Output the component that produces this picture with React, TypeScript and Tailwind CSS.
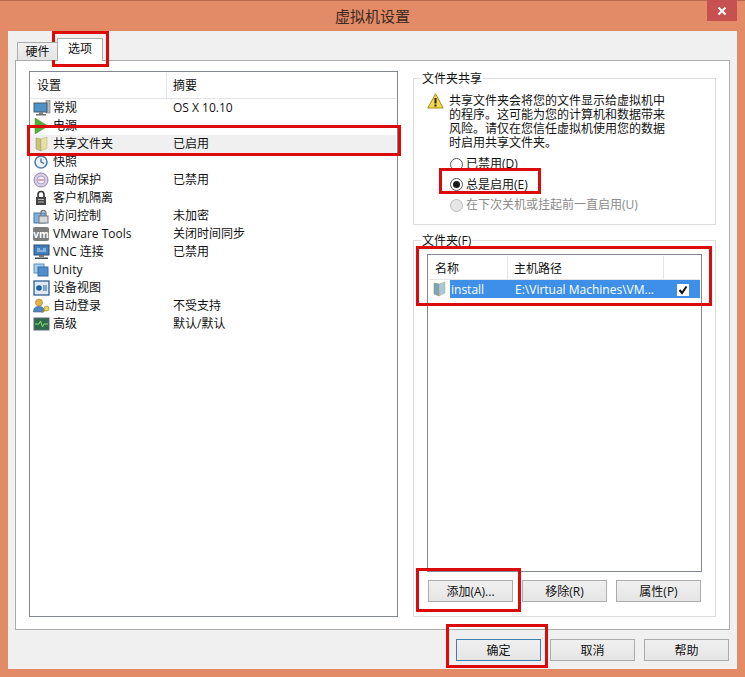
const rows = [
  { icon: "general", name: "常规", value: "OS X 10.10" },
  { icon: "power", name: "电源", value: "" },
  { icon: "folder", name: "共享文件夹", value: "已启用", selected: true },
  { icon: "snapshot", name: "快照", value: "" },
  { icon: "autosave", name: "自动保护", value: "已禁用" },
  { icon: "lock", name: "客户机隔离", value: "" },
  { icon: "access", name: "访问控制", value: "未加密" },
  { icon: "vm", name: "VMware Tools", value: "关闭时间同步" },
  { icon: "vnc", name: "VNC 连接", value: "已禁用" },
  { icon: "unity", name: "Unity", value: "" },
  { icon: "device", name: "设备视图", value: "" },
  { icon: "login", name: "自动登录", value: "不受支持" },
  { icon: "advanced", name: "高级", value: "默认/默认" },
]

function FolderIcon({ blue = false }: { blue?: boolean }) {
  const back = blue ? "#7fa3b8" : "#c9c27a"
  const front = blue ? "#a9c6d6" : "#e6dfa0"
  return (
    <svg width="16" height="16" viewBox="0 0 16 16">
      <path d="M2 2l5 1v12l-5-2z" fill={back} stroke="#8a8a6a" strokeWidth="0.5" />
      <path d="M7 3l6-2v11l-6 3z" fill={front} stroke="#a8a878" strokeWidth="0.5" />
    </svg>
  )
}

function RowIcon({ name }: { name: string }) {
  switch (name) {
    case "general":
      return (
        <svg width="18" height="16" viewBox="0 0 18 16">
          <rect x="13" y="0" width="4" height="13" fill="#b8bcc2" stroke="#6c7075" strokeWidth="0.6" />
          <rect x="1" y="3" width="13" height="9" fill="#4c93c8" stroke="#4d5a66" />
          <rect x="6" y="12" width="4" height="2" fill="#7c838a" />
          <rect x="3" y="14" width="10" height="1.5" fill="#6c7075" />
        </svg>
      )
    case "power":
      return (
        <svg width="18" height="16" viewBox="0 0 18 16">
          <path d="M2 0l13 8-13 8z" fill="#55ae3a" stroke="#3c8a28" strokeWidth="0.5" />
        </svg>
      )
    case "folder":
      return <FolderIcon />
    case "snapshot":
      return (
        <svg width="18" height="16" viewBox="0 0 18 16">
          <circle cx="8" cy="8" r="6" fill="#eaf2fa" stroke="#4d7fb0" strokeWidth="1.6" />
          <path d="M8 4.5V8l3 1.5" fill="none" stroke="#3d5f85" strokeWidth="1.2" />
        </svg>
      )
    case "autosave":
      return (
        <svg width="18" height="16" viewBox="0 0 18 16">
          <circle cx="8" cy="8" r="7" fill="#d8d0e4" stroke="#8f84a8" />
          <circle cx="8" cy="8" r="4" fill="#f2eef6" stroke="#a99cc0" />
          <path d="M5 8h6" stroke="#b05a8a" strokeWidth="1" />
        </svg>
      )
    case "lock":
      return (
        <svg width="18" height="16" viewBox="0 0 18 16">
          <path d="M5 7V4.5a3 3 0 0 1 6 0V7" fill="none" stroke="#333" strokeWidth="1.6" />
          <rect x="3" y="7" width="10" height="8" fill="#444" />
          <path d="M5 9.5h6M5 12h6" stroke="#bbb" />
        </svg>
      )
    case "access":
      return (
        <svg width="18" height="16" viewBox="0 0 18 16">
          <rect x="1" y="5" width="11" height="10" fill="#7fb2dc" stroke="#4a7ba8" />
          <rect x="6" y="8" width="9" height="7" fill="#d9d9d9" stroke="#777" />
          <path d="M8 8V5a2.500 2.500 0 0 1 5 0v3" fill="none" stroke="#777" strokeWidth="1.3" />
        </svg>
      )
    case "vm":
      return (
        <svg width="18" height="16" viewBox="0 0 18 16">
          <rect x="0" y="1" width="16" height="14" rx="2" fill="#7c7c7c" />
          <text x="8" y="11.500" textAnchor="middle" fontSize="10" fontWeight="700" fill="#fff">
            vm
          </text>
        </svg>
      )
    case "vnc":
      return (
        <svg width="18" height="16" viewBox="0 0 18 16">
          <rect x="1" y="1" width="15" height="10" fill="#3f7fbf" stroke="#2d4a6a" />
          <path d="M4 5h3M10 5h3M4 7h9" stroke="#fff" strokeWidth="0.8" />
          <rect x="6" y="11" width="5" height="2" fill="#777" />
          <rect x="2" y="13.500" width="13" height="1.500" fill="#444" />
        </svg>
      )
    case "unity":
      return (
        <svg width="18" height="16" viewBox="0 0 18 16">
          <rect x="1" y="2" width="10" height="9" fill="#a9cdec" stroke="#5d8fbb" />
          <rect x="5" y="5" width="10" height="9" fill="#4f90cc" stroke="#3a6d9e" />
        </svg>
      )
    case "device":
      return (
        <svg width="18" height="16" viewBox="0 0 18 16">
          <rect x="1" y="1" width="15" height="14" fill="#dfe9f3" stroke="#2e5f94" strokeWidth="1.3" />
          <circle cx="6" cy="8" r="2.800" fill="#1f5fa8" />
          <path d="M10 6h4M10 8h4M10 10h4" stroke="#1f5fa8" />
        </svg>
      )
    case "login":
      return (
        <svg width="18" height="16" viewBox="0 0 18 16">
          <circle cx="6" cy="4.500" r="3.500" fill="#e8b04a" stroke="#a87820" strokeWidth="0.6" />
          <path d="M0.500 14c0-4 2-5.500 5.500-5.500S11 10 11 12v2z" fill="#4f86c6" stroke="#2f5f96" strokeWidth="0.6" />
          <circle cx="13.500" cy="10.500" r="2.500" fill="#f0cf5a" stroke="#a88a20" strokeWidth="0.7" />
          <path d="M11.500 12l-3 2.500" stroke="#a88a20" strokeWidth="1.3" />
        </svg>
      )
    default:
      return (
        <svg width="18" height="16" viewBox="0 0 18 16">
          <rect x="1" y="2" width="15" height="12" fill="#2e6b4e" stroke="#5a6a74" />
          <path d="M2 8h4l1.500-3 2 6 1.500-3h4" fill="none" stroke="#8fe36a" />
        </svg>
      )
  }
}

function WarningIcon() {
  return (
    <svg width="17" height="16" viewBox="0 0 17 16">
      <path d="M8.500 0.800L16.200 15H0.800z" fill="#f5d94a" stroke="#a58a1c" strokeLinejoin="round" />
      <rect x="7.500" y="5" width="2" height="5.500" fill="#222" />
      <rect x="7.500" y="11.500" width="2" height="2" fill="#222" />
    </svg>
  )
}

function Radio({ checked = false, disabled = false }: { checked?: boolean; disabled?: boolean }) {
  return (
    <span
      className={`flex h-[13px] w-[13px] shrink-0 items-center justify-center rounded-full border ${
        disabled ? "border-[#bcbcbc] bg-[#e6e6e6]" : "border-[#555555] bg-white"
      }`}
    >
      {checked && <span className="h-[7px] w-[7px] rounded-full bg-[#1a1a1a]" />}
    </span>
  )
}

function WinButton({ label, isDefault = false }: { label: string; isDefault?: boolean }) {
  return (
    <button
      className={`h-[22px] w-[85px] border bg-gradient-to-b from-[#f0f0f0] to-[#e5e5e5] pt-[1px] text-[12px] text-[#111111] ${
        isDefault ? "border-[#3c7fb1]" : "border-[#acacac]"
      }`}
    >
      {label}
    </button>
  )
}

export default function App() {
  return (
    <div
      className="relative flex h-[677px] w-[745px] flex-col overflow-hidden bg-[#e38a66] px-[8px] pb-[8px] text-[12px] leading-[14px] text-[#111111]"
      style={{ fontFamily: '"Open Sans", "Noto Sans CJK SC", sans-serif' }}
    >
      {/* title bar */}
      <div className="-mx-[8px] flex h-[31px] shrink-0 items-center justify-center border-t border-[#b9694a] pb-[1px] text-[15px] text-[#3a2a22]">
        虚拟机设置
      </div>
      <div className="absolute right-[8px] top-0 flex h-[21px] w-[30px] items-center justify-center bg-[#c75050]">
        <svg width="10" height="10" viewBox="0 0 10 10">
          <path d="M1.500 1.500l7 7M8.500 1.500l-7 7" stroke="#fff" strokeWidth="2" />
        </svg>
      </div>

      <div className="flex flex-1 flex-col bg-[#f0f0f0] px-[7px]">
        {/* tabs */}
        <div className="relative z-10 flex h-[29px] shrink-0 items-end pl-[2px]">
          <div className="flex h-[18px] w-[40px] items-center justify-center border border-b-0 border-r-0 border-[#acacac] bg-gradient-to-b from-[#f0f0f0] to-[#e5e5e5]">
            硬件
          </div>
          <div className="-mb-[1px] flex h-[23px] w-[46px] items-center justify-center border border-b-0 border-[#acacac] bg-white pb-[3px]">
            选项
          </div>
        </div>

        {/* tab page */}
        <div className="flex h-[570px] shrink-0 gap-[15px] border border-[#acacac] bg-white pb-[12px] pl-[13px] pr-[13px] pt-[10px]">
          <div className="flex w-[369px] shrink-0 flex-col border border-[#828790] bg-white p-[1px]">
            <div className="flex h-[26px] shrink-0 items-center border-b border-[#e5e5e5]">
              <span className="w-[136px] self-stretch border-r border-[#e5e5e5] pl-[6px] leading-[25px]">设置</span>
              <span className="pl-[6px]">摘要</span>
            </div>
            {rows.map((row) => (
              <div
                key={row.name}
                className={`flex h-[18px] shrink-0 items-center ${row.selected ? "bg-[#f0f0f0]" : ""}`}
              >
                <span className="flex w-[20px] shrink-0 justify-center pl-[2px]">
                  <RowIcon name={row.icon} />
                </span>
                <span className="w-[121px] shrink-0 whitespace-nowrap pl-[2px]">{row.name}</span>
                <span className="whitespace-nowrap pl-[1px]">{row.value}</span>
              </div>
            ))}
          </div>

          <div className="flex w-[303px] shrink-0 flex-col gap-[15px] pt-[7px]">
            {/* share group */}
            <div className="relative h-[147px] shrink-0 border border-[#dcdcdc] pl-[13px] pr-[10px] pt-[15px]">
              <span className="absolute -top-[7px] left-[7px] bg-white px-[1px]">文件夹共享</span>
              <div className="flex gap-[5px]">
                <span className="-mt-[1px]">
                  <WarningIcon />
                </span>
                <p className="w-[240px]">
                  共享文件夹会将您的文件显示给虚拟机中
                  <br />
                  的程序。这可能为您的计算机和数据带来
                  <br />
                  风险。请仅在您信任虚拟机使用您的数据
                  <br />
                  时启用共享文件夹。
                </p>
              </div>
              <div className="mt-[7px] flex flex-col gap-[6.500px] pl-[23px]">
                <label className="flex items-center gap-[3px]">
                  <Radio />
                  已禁用(D)
                </label>
                <label className="flex items-center gap-[3px]">
                  <Radio checked />
                  总是启用(E)
                </label>
                <label className="flex items-center gap-[3px] text-[#8a8a8a]">
                  <Radio disabled />
                  在下次关机或挂起前一直启用(U)
                </label>
              </div>
            </div>

            {/* folders group */}
            <div className="relative flex flex-1 flex-col border border-[#dcdcdc] px-[13px] pt-[13px]">
              <span className="absolute -top-[7px] left-[7px] bg-white px-[1px]">文件夹(F)</span>
              <div className="flex h-[318px] shrink-0 flex-col border border-[#828790] p-[1px]">
                <div className="flex h-[24px] shrink-0 items-center border-b border-[#e5e5e5]">
                  <span className="w-[79px] self-stretch border-r border-[#e5e5e5] pl-[6px] leading-[25px]">名称</span>
                  <span className="w-[156px] self-stretch border-r border-[#e5e5e5] pl-[6px] leading-[25px]">主机路径</span>
                </div>
                <div className="flex h-[18px] shrink-0 items-center">
                  <span className="flex w-[21px] shrink-0 justify-center pl-[1px]">
                    <FolderIcon blue />
                  </span>
                  <div className="flex h-full w-[250px] items-center bg-[#3d8fe8] pl-[1px] pt-[1px] text-white">
                    <span className="w-[64px]">install</span>
                    <span className="w-[162px] whitespace-nowrap">E:\Virtual Machines\VM...</span>
                    <span className="flex h-[12px] w-[12px] items-center justify-center bg-white">
                      <svg width="10" height="10" viewBox="0 0 10 10">
                        <path d="M1.500 5l2.500 3 4.500-6.500" fill="none" stroke="#111" strokeWidth="2" />
                      </svg>
                    </span>
                  </div>
                </div>
              </div>
              <div className="mt-[8px] flex gap-[9px] pl-[1px]">
                <WinButton label="添加(A)..." />
                <WinButton label="移除(R)" />
                <WinButton label="属性(P)" />
              </div>
            </div>
          </div>
        </div>

        {/* footer */}
        <div className="flex flex-1 items-start justify-end gap-[9px] pr-[1px] pt-[9px]">
          <WinButton label="确定" isDefault />
          <WinButton label="取消" />
          <WinButton label="帮助" />
        </div>
      </div>

      {/* red annotation boxes drawn over the screenshot */}
      <div className="absolute left-[52px] top-[31px] h-[36px] w-[57px] border-[3px] border-[#dc0a0a]" />
      <div className="absolute left-[27px] top-[125px] h-[31px] w-[374px] border-[3px] border-[#dc0a0a]" />
      <div className="absolute left-[439px] top-[168px] h-[26px] w-[102px] border-[3px] border-[#dc0a0a]" />
      <div className="absolute left-[416px] top-[246px] h-[60px] w-[296px] border-[3px] border-[#dc0a0a]" />
      <div className="absolute left-[416px] top-[568px] h-[44px] w-[105px] border-[3px] border-[#dc0a0a]" />
      <div className="absolute left-[446px] top-[624px] h-[44px] w-[102px] border-[3px] border-[#dc0a0a]" />
    </div>
  )
}
